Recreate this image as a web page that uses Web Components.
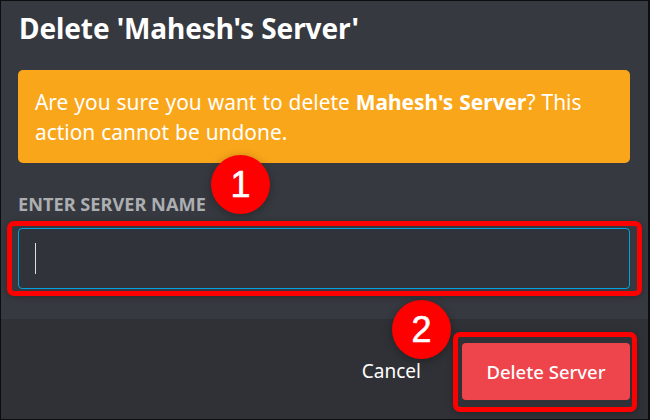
<!DOCTYPE html>
<html>
<head>
<meta charset="utf-8">
<style>
html, body { margin: 0; padding: 0; background: #0c0d0f; }
</style>
</head>
<body>
<delete-dialog>
	<span slot="title">Delete 'Mahesh's Server'</span>
	<warning-card>Are you sure you want to delete <b>Mahesh's Server</b>? This action cannot be undone.</warning-card>
	<name-field label="ENTER SERVER NAME"></name-field>
	<text-button slot="footer">Cancel</text-button>
	<danger-button slot="footer">Delete Server</danger-button>
	<red-badge slot="overlay" style="left:211px;top:155px">1</red-badge>
	<red-badge slot="overlay" style="left:392px;top:300px">2</red-badge>
	<red-box slot="overlay" style="left:7px;top:221px;width:635px;height:75px"></red-box>
	<red-box slot="overlay" style="left:453px;top:332px;width:184px;height:80px"></red-box>
</delete-dialog>

<script>
class DeleteDialog extends HTMLElement {
	constructor () {
		super()
		this.attachShadow({ mode: 'open' })
		this.shadowRoot.innerHTML = `<style>
			:host {
				display: flex;
				flex-direction: column;
				box-sizing: border-box;
				position: relative;
				width: 650px;
				height: 420px;
				border: 1px solid #0c0d0f;
				border-right-width: 2px;
				background: #36393f;
				color: #fff;
				font-family: "Noto Sans", "Open Sans", sans-serif;
				overflow: hidden;
			}
			.body { flex: 1; display: flex; flex-direction: column; padding: 0 18px 0 17px; }
			h1 { margin: 9px 0 24px 1px; font-size: 28px; line-height: 36px; font-weight: 700; letter-spacing: -.1px; }
			footer {
				height: 100px;
				display: flex;
				justify-content: flex-end;
				align-items: center;
				background: #2f3136;
				padding: 0 18px 0 0;
				box-sizing: border-box;
			}
			.overlay { position: absolute; left: -1px; top: -1px; }
		</style>
		<div class="body"><h1><slot name="title"></slot></h1><slot></slot></div>
		<footer><slot name="footer"></slot></footer>
		<div class="overlay"><slot name="overlay"></slot></div>`
	}
}

class WarningCard extends HTMLElement {
	constructor () {
		super()
		this.attachShadow({ mode: 'open' })
		this.shadowRoot.innerHTML = `<style>
			:host {
				display: block;
				box-sizing: border-box;
				height: 93px;
				padding: 17px 17px;
				border-radius: 5px;
				background: #faa61a;
				font-size: 20.9px;
				word-spacing: .6px;
				line-height: 30px;
				color: #fff;
			}
		</style><slot></slot>`
	}
}

class NameField extends HTMLElement {
	constructor () {
		super()
		this.attachShadow({ mode: 'open' })
		this.shadowRoot.innerHTML = `<style>
			:host { display: block; margin-top: 31px; }
			label {
				display: block;
				font-size: 18.2px;
				line-height: 20px;
				font-weight: 700;
				color: #b9bbbe;
				opacity: .9;
				margin-bottom: 14px;
				white-space: nowrap;
			}
			.input {
				box-sizing: border-box;
				height: 61px;
				display: flex;
				align-items: center;
				padding-left: 16px;
				border: 1px solid #00a3e0;
				border-radius: 4px;
				background: #303339;
			}
			i { width: 1px; height: 31px; background: #dcddde; }
		</style><label></label><div class="input"><i></i></div>`
		this.shadowRoot.querySelector('label').textContent = this.getAttribute('label')
	}
}

class TextButton extends HTMLElement {
	constructor () {
		super()
		this.attachShadow({ mode: 'open' })
		this.shadowRoot.innerHTML = `<style>
			:host { display: block; font-size: 19px; color: #fff; margin-right: 41px; margin-top: 4px; }
		</style><slot></slot>`
	}
}

class DangerButton extends HTMLElement {
	constructor () {
		super()
		this.attachShadow({ mode: 'open' })
		this.shadowRoot.innerHTML = `<style>
			:host {
				display: flex;
				align-items: center;
				justify-content: center;
				width: 168px;
				height: 57px;
				margin-top: 5px;
				border-radius: 4px;
				background: #ee444c;
				font-size: 18.5px;
				font-weight: 500;
				color: #fff;
			}
		</style><slot></slot>`
	}
}

class RedBadge extends HTMLElement {
	constructor () {
		super()
		this.attachShadow({ mode: 'open' })
		this.shadowRoot.innerHTML = `<style>
			:host {
				position: absolute;
				display: flex;
				align-items: center;
				justify-content: center;
				width: 59px;
				height: 59px;
				border-radius: 50%;
				background: #fe0000;
				color: #fff;
				font-family: "Liberation Sans", sans-serif;
				font-size: 36px;
				-webkit-text-stroke: .6px #fff;
				box-shadow: 0 2px 10px rgba(0,0,0,.3);
			}
		</style><slot></slot>`
	}
}

class RedBox extends HTMLElement {
	constructor () {
		super()
		this.attachShadow({ mode: 'open' })
		this.shadowRoot.innerHTML = `<style>
			:host {
				position: absolute;
				box-sizing: border-box;
				border: 5px solid #fe0000;
				border-radius: 7px;
				box-shadow: 0 1px 6px rgba(0,0,0,.25);
			}
		</style>`
	}
}

customElements.define('delete-dialog', DeleteDialog)
customElements.define('warning-card', WarningCard)
customElements.define('name-field', NameField)
customElements.define('text-button', TextButton)
customElements.define('danger-button', DangerButton)
customElements.define('red-badge', RedBadge)
customElements.define('red-box', RedBox)
</script>
</body>
</html>
